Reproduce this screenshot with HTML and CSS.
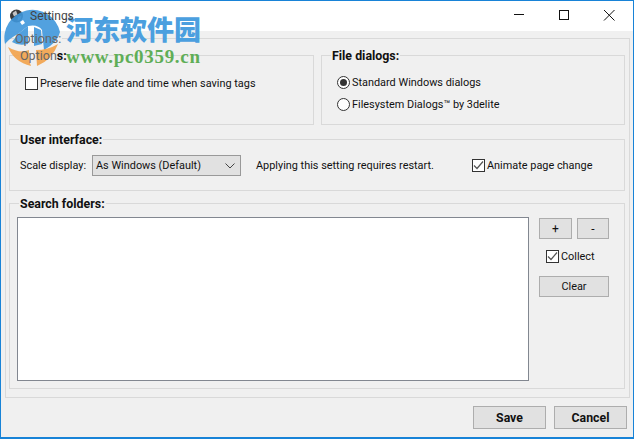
FILE: index.html
```html
<!DOCTYPE html>
<html lang="en">
<head>
    <meta charset="UTF-8">
    <meta name="viewport" content="width=device-width, initial-scale=1.0">
    <title>Settings</title>
    <link rel="stylesheet" href="styles.css">
</head>
<body>

<div class="window">
    <div class="titlebar">
        <svg class="app-icon" width="13" height="14" viewBox="0 0 13 14">
            <circle cx="6.5" cy="7" r="6.5" fill="#3a3a3a"/>
            <path d="M2.5 4 L6 1.5 L7.5 5.5 L4 7.5 Z" fill="#c4c4c4"/>
            <path d="M8 8 L11.5 6.5 L10.5 10.5 L7.5 12 Z" fill="#a0a0a0"/>
        </svg>
        <span class="title">Settings</span>
        <div class="caption-buttons">
            <svg width="12" height="12" viewBox="0 0 12 12"><path d="M1 5.5 H11" stroke="#111" fill="none"/></svg>
            <svg width="12" height="12" viewBox="0 0 12 12"><rect x="1.5" y="1.5" width="9" height="9" stroke="#111" fill="none"/></svg>
            <svg width="12" height="12" viewBox="0 0 12 12"><path d="M1 1 L11.5 11.5 M11.5 1 L1 11.5" stroke="#111" fill="none"/></svg>
        </div>
    </div>

    <div class="content">
        <fieldset class="frame outer">
            <legend class="faint"><span class="on-logo">Options:</span></legend>

            <div class="top-row">
                <fieldset class="frame group options-group">
                    <legend><span class="on-logo wash">Option</span><span class="on-logo">s:</span></legend>
                    <label class="check"><span class="box"></span>Preserve file date and time when saving tags</label>
                </fieldset>
                <fieldset class="frame group dialogs-group">
                    <legend>File dialogs:</legend>
                    <label class="radio"><span class="dot on"></span>Standard Windows dialogs</label>
                    <label class="radio"><span class="dot"></span>Filesystem Dialogs™ by 3delite</label>
                </fieldset>
            </div>

            <fieldset class="frame group ui-group">
                <legend>User interface:</legend>
                <div class="ui-row">
                    <span class="scale-label">Scale display:</span>
                    <div class="select">
                        <span>As Windows (Default)</span>
                        <svg width="10" height="6" viewBox="0 0 10 6"><path d="M0.5 0.5 L5 5 L9.5 0.5" stroke="#444" fill="none"/></svg>
                    </div>
                    <span class="hint">Applying this setting requires restart.</span>
                    <label class="check"><span class="box"><svg width="11" height="11" viewBox="0 0 11 11"><path d="M1 5.5 L4 8.5 L10 1.5" stroke="#555" stroke-width="1.2" fill="none"/></svg></span>Animate page change</label>
                </div>
            </fieldset>

            <fieldset class="frame group folders-group">
                <legend>Search folders:</legend>
                <div class="folders-row">
                    <div class="folder-list"></div>
                    <div class="folder-tools">
                        <div class="pair">
                            <button class="btn small">+</button>
                            <button class="btn small minus">-</button>
                        </div>
                        <label class="check collect"><span class="box"><svg width="11" height="11" viewBox="0 0 11 11"><path d="M1 5.5 L4 8.5 L10 1.5" stroke="#555" stroke-width="1.2" fill="none"/></svg></span>Collect</label>
                        <button class="btn clear">Clear</button>
                    </div>
                </div>
            </fieldset>
        </fieldset>

        <div class="footer">
            <button class="btn action">Save</button>
            <button class="btn action">Cancel</button>
        </div>
    </div>

    <!-- watermark over the top left corner -->
    <div class="watermark">
        <svg class="wm-logo" width="70" height="70" viewBox="0 0 70 70">
            <path d="M5 44 A28 28 0 0 1 60 32 Q58 42 44 50 L42 30 Q38 24 28 26 L18 34 Q10 38 5 44 Z" fill="#3f97dc" opacity="0.9"/>
            <path d="M18 34 L28 26 L28 44 Q18 46 12 42 Z" fill="#3f97dc" opacity="0.9"/>
            <path d="M34 27 L41 30 L42 44 L34 46 Z" fill="#3f97dc" opacity="0.9"/>
            <path d="M23 20 L25 23 L22 25 L20 22 Z" fill="#fff"/>
            <path d="M8 47 Q20 54 29 50 L29 60 L31 66 Q14 62 8 47 Z" fill="#f2a24a" opacity="0.9"/>
            <path d="M36 50 Q48 50 58 44 Q52 60 37 66 Z" fill="#f2a24a" opacity="0.9"/>
        </svg>
        <div class="wm-cn">河东软件园</div>
        <div class="wm-url">www.pc0359.cn</div>
    </div>
</div>

</body>
</html>
```

FILE: styles.css
```css
* {
    box-sizing: border-box;
}
html, body {
    margin: 0;
    padding: 0;
}
body {
    width: 634px;
    height: 439px;
    overflow: hidden;
    font-family: Roboto, "Noto Sans", Arial, sans-serif;
    font-size: 10.9px;
    color: #111;
}
.window {
    position: relative;
    width: 634px;
    height: 439px;
    border: 1px solid #1883d7;
    border-bottom-width: 2px;
    background-color: #f0f0f0;
    display: flex;
    flex-direction: column;
}
.titlebar {
    height: 30px;
    flex: none;
    background-color: #fff;
    display: flex;
    align-items: center;
    padding-left: 9px;
}
.app-icon {
    margin-right: 7px;
    margin-top: -1px;
}
.title {
    font-size: 12px;
    color: #444;
    position: relative;
    z-index: 2;
}
.caption-buttons {
    margin-left: auto;
    display: flex;
    gap: 33px;
    padding: 0 18px 2px 0;
}
.content {
    flex: 1;
    display: flex;
    flex-direction: column;
    padding: 0 3px 0 4px;
}
.frame {
    margin: 0;
    border: 1px solid #d9d9d9;
    min-width: 0;
}
.frame legend {
    font-size: 12.4px;
    font-weight: 700;
    padding: 2px 1px 0;
    margin-left: 9px;
    line-height: 14px;
}
.outer {
    height: 367px;
    flex: none;
    padding: 0 4px 0 3px;
}
.outer > legend.faint {
    font-weight: 400;
    font-size: 12.5px;
    padding-top: 1px;
    line-height: 13px;
    margin-left: 5px;
}
.on-logo {
    position: relative;
    z-index: 2;
}
.faint .on-logo, .wash {
    color: #666;
}
.wash {
    font-weight: 400;
    font-size: 12.5px;
}
.top-row {
    display: flex;
    gap: 7px;
    margin-top: 2px;
}
.group {
    padding: 0;
}
.options-group {
    width: 305px;
    height: 78px;
    padding: 12px 0 0 15px;
}
.dialogs-group {
    width: 304px;
    height: 78px;
    padding: 8px 0 0 15px;
}
.options-group legend, .dialogs-group legend {
    margin-left: -6px;
}
.check, .radio {
    display: flex;
    align-items: center;
    white-space: nowrap;
    height: 16px;
}
.box {
    width: 13px;
    height: 13px;
    border: 1px solid #333;
    background-color: #fff;
    margin-right: 2px;
    display: flex;
    align-items: center;
    justify-content: center;
    flex: none;
}
.radio {
    height: 22px;
}
.dot {
    width: 13px;
    height: 13px;
    border: 1px solid #333;
    border-radius: 50%;
    background-color: #fff;
    margin-right: 2px;
    flex: none;
    display: flex;
    align-items: center;
    justify-content: center;
}
.dot.on::after {
    content: "";
    width: 7px;
    height: 7px;
    border-radius: 50%;
    background-color: #333;
}
.ui-group {
    height: 60px;
    margin-top: 6px;
}
.ui-row {
    display: flex;
    align-items: center;
    padding: 8px 0 0 10px;
}
.scale-label {
    width: 72px;
    white-space: nowrap;
}
.select {
    width: 149px;
    height: 21px;
    border: 1px solid #999;
    background-color: #e1e1e1;
    display: flex;
    align-items: center;
    justify-content: space-between;
    padding: 0 5px 0 3px;
}
.hint {
    width: 216px;
    margin-left: 15px;
    white-space: nowrap;
}
.folders-group {
    height: 194px;
    margin-top: 4px;
}
.folders-row {
    display: flex;
    padding: 0 0 0 7px;
}
.folder-list {
    width: 512px;
    height: 164px;
    background-color: #fff;
    border: 1px solid #828790;
    margin-top: 6px;
}
.folder-tools {
    width: 70px;
    margin-left: 10px;
    margin-top: 7px;
}
.pair {
    display: flex;
    gap: 5px;
}
.btn {
    font: inherit;
    color: #111;
    background-color: #e1e1e1;
    border: 1px solid #adadad;
    padding: 0;
    cursor: pointer;
}
.small {
    width: 33px;
    height: 21px;
    font-size: 12px;
}
.minus {
    width: 32px;
}
.collect {
    margin: 9px 0 0 7px;
}
.clear {
    width: 70px;
    height: 21px;
    margin-top: 12px;
}
.footer {
    display: flex;
    justify-content: flex-end;
    gap: 8px;
    padding: 8px 3px 0 0;
}
.action {
    width: 73px;
    height: 23px;
    padding-top: 1px;
    font-size: 12.3px;
    font-weight: 700;
}
.watermark {
    position: absolute;
    left: -1px;
    top: -1px;
    width: 210px;
    height: 70px;
    z-index: 1;
    pointer-events: none;
}
.wm-logo {
    position: absolute;
    left: 0;
    top: 0;
}
.wm-cn {
    position: absolute;
    left: 66px;
    top: 13px;
    font-family: "Noto Sans CJK SC", sans-serif;
    font-weight: 900;
    font-size: 27px;
    line-height: 32px;
    color: #4b9fdf;
    white-space: nowrap;
}
.wm-url {
    position: absolute;
    left: 66px;
    top: 47px;
    font-family: "Liberation Serif", serif;
    font-weight: 700;
    font-size: 19px;
    line-height: 20px;
    letter-spacing: 0.7px;
    color: #5fae57;
    white-space: nowrap;
}
```
